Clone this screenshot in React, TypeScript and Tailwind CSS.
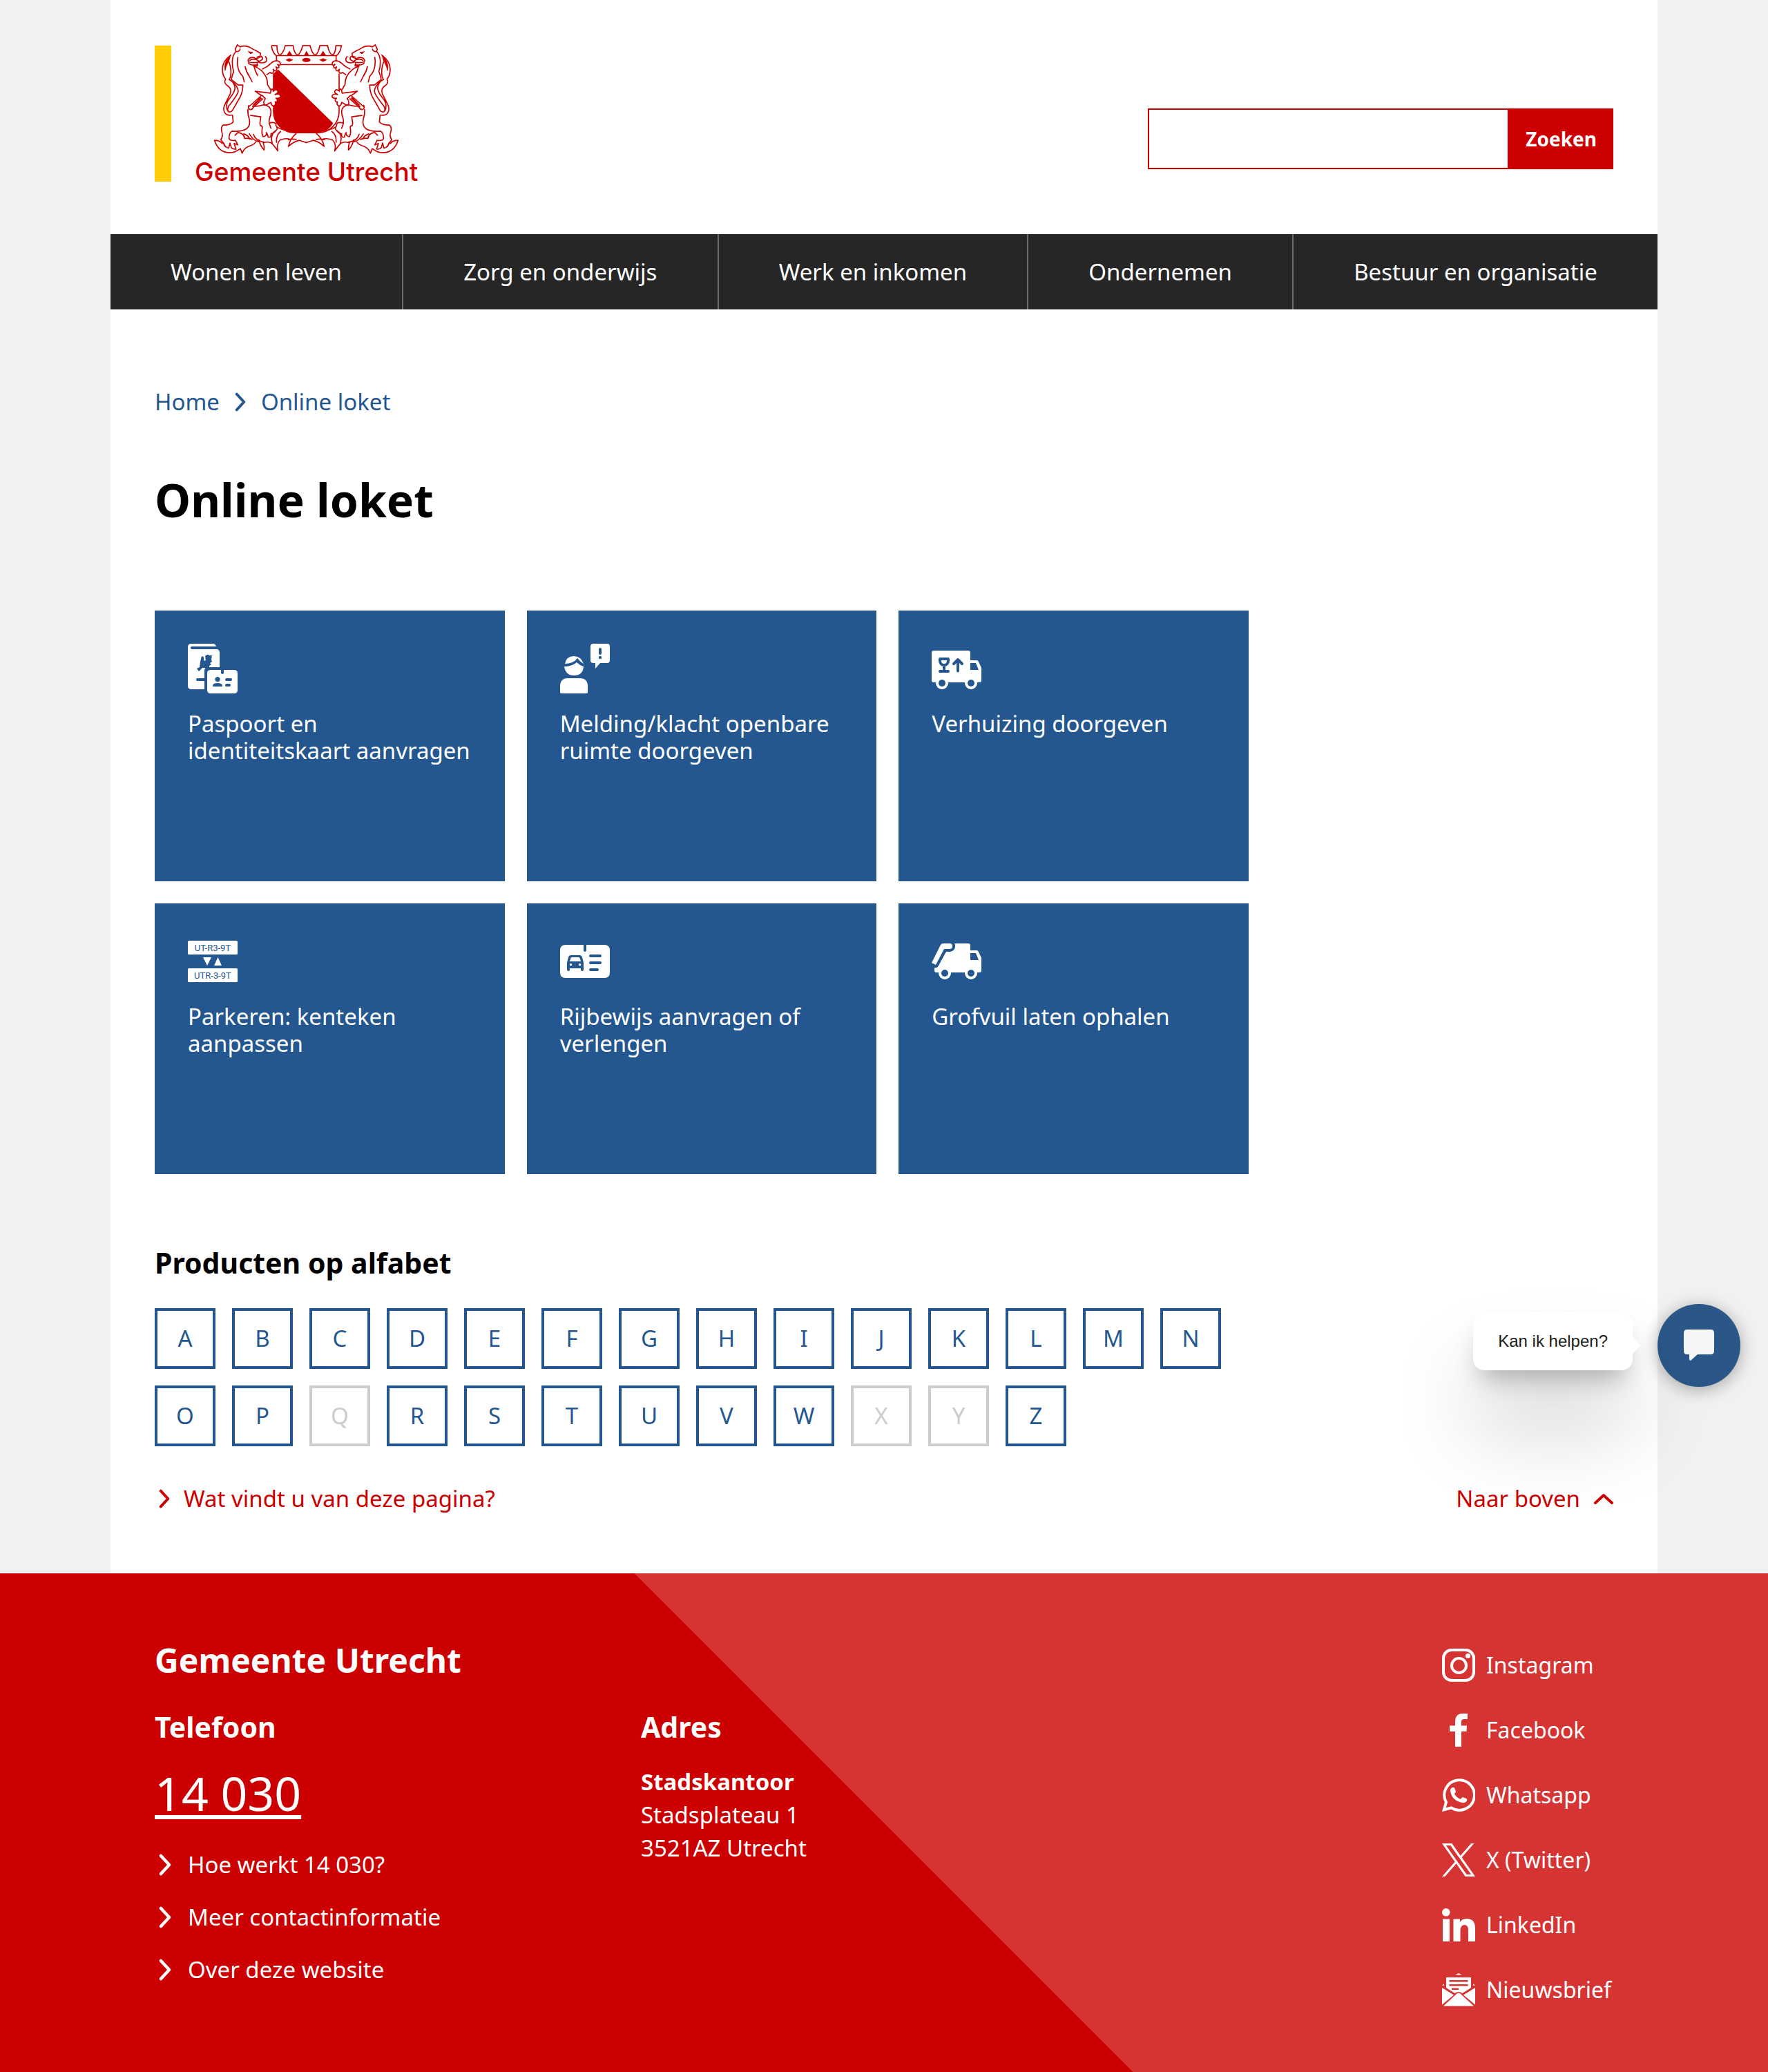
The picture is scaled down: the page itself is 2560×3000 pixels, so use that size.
import React from "react";

const BLUE = "#24578f";

function Lion() {
  return (
    <g transform="translate(300 18)" fill="none" stroke="#c00" strokeWidth="5" strokeLinejoin="round" strokeLinecap="round">
      {/* head */}
      <path d="M128 56l-3-10 9-19 12 9q22-9 44 3 12 8 22 12l23 13-2 12-14 5M128 56q14 2 18-10" />
      <path d="M182 57l10 9 9-6-9-1z" fill="#c00" strokeWidth="3" />
      <path d="M180 96q4-14 20-14 10 0 14 6l20-8M180 96q2 8 18 8 16 2 32-3l-12-9q-22-6-30 3M182 106q10 12 40 8M238 77q8 6 4 14-8 8-16 8M256 78q12 14 0 24-10 6-26 2M204 119q12 3 17 0l-1-10" />
      {/* mane, neck and chest */}
      <path d="M128 56q-16 18-16 44t6 44q-6 12-10 34l30 24h20q0 28-12 52l-32 56q-8 12-18 8-8-8 0-24 40-50 42-66-2-18-22-38M136 82q-8 54 22 82l6 24M168 122q4 22 18 42l12 24M206 118q4 24 16 42M205 120q36 12 52 44 8 14 8 36l16 26" />
      {/* tail */}
      <path d="M105 72q-36 26-36 62 0 26 14 42-10 18 10 30 18 12 10 34l-20 40q-14 24-4 42 10 14 32 10M98 102q12 34 6 66l-6 10q22 8 26 36-2 20-22 44-18 18-14 42 0 12 8 16" />
      <path d="M105 72q-4 22-14 38-8 14-10 30-6-18 2-38t22-30z" fill="#c00" strokeWidth="2" />
      {/* upper paw */}
      <path d="M244 132q20-8 38-26 10-10 24-10 16 2 15 16-4 6-12 0 8 10 5 14-6 4-12-3 6 12 0 16-8 4-12-6 4 12-2 16-6 4-12-2l-14 10" fill="#fff" />
      {/* lower paw */}
      <path d="M212 229q16 14 32 20l12 12q-10 12-6 24 10 8 18-2l12-6q2 16 12 16 12-6 6-18 10 2 10-8-2-6-6-8 18 2 20-8-4-14-24-8 14-6 12-14-6-14-20 0 2-8-6-10-6 8-6 18z" fill="#fff" />
      {/* hind legs */}
      <path d="M184 296l54-48M244 262l-42 38q-2 10-14 8-10-6-4-18" />
      <path d="M202 288l32-34 6 6-34 32z" fill="#c00" strokeWidth="2" />
      <path d="M248 288q30 2 32 28 0 16-6 30-4 16 0 20 30-6 28 12l6 12q-8 18-28 24 2 18-12 14-2-12-8-20 2 18-14 18-8-14-4-36 4-10-8-12l-2-10 4-28-44-6M248 288q-24 8-48 6" />
      <path d="M113 334l3 28q-10 14-44 14-10 8-6 28 8 18-4 36l12 14q6 18 22 22l6-22 6 20q8 8 20 6l-8-24 16 6-10-20q-24 4-28-8 0-26 14-32 38 4 62-10 18-14 12-42-8-22-6-42" />
      <path d="M272 368l8 22M74 454l6 14" />
      {/* foliage */}
      <path d="M35 442q22 0 34 14M35 442q16 52 66 54 24 0 46-18l8 20q8-26 40-34 12-4 18-14M124 420l12-12q26 2 30 26 16-4 32 4M162 414q20 6 26 22M204 416q8 28 46 34M186 414q18 30 40 34M228 440q4 24 22 44 2-22-6-36M250 452q26-8 42 12l18 24q-8-30 10-48 22-8 38-4M300 400q-26 20-14 56M322 404q-20 14-18 46M390 412q-28 24-34 56 22-20 48-26l30 10M356 440q14-6 34-2M306 384q30 20 86 14" />
    </g>
  );
}

function Crest() {
  return (
    <svg viewBox="330 40 810 485" className="h-[162px] w-[270px]" aria-hidden="true">
      <g fill="none" stroke="#c00" strokeWidth="5">
        <path d="M591 170V335a92 92 0 0 0 92 92h100a92 92 0 0 0 93-92V170" />
        <path d="M604 92H863V131H604z" />
        <path d="M582 49h24q0 38 14 40 14-8 22-40h34q6 38 20 40 12-4 22-40h32q10 38 22 40 14-4 20-40h34q8 38 22 40 12-6 14-40h24q-4 30-22 44M582 49q4 30 22 44" />
      </g>
      <path d="M591 170l20-18L850 385Q828 427 770 427H683a92 92 0 0 1-92-92z" fill="#c00" />
      <path d="M643 111l16-8 18 8-18 8zM790 111l16-8 18 8-18 8zM648 91l12-20 14 20zM794 91l12-20 14 20zM724 91l10-20 12 20z" fill="#c00" />
      <ellipse cx="734" cy="111" rx="18" ry="9" fill="#c00" />
      <Lion />
      <g transform="translate(1467 0) scale(-1 1)">
        <Lion />
      </g>
    </svg>
  );
}

function Chevron({ className }: { className: string }) {
  return (
    <svg viewBox="0 0 18 32" className={className} fill="none" stroke="currentColor" strokeWidth="4.5" strokeLinecap="round" strokeLinejoin="round" aria-hidden="true">
      <path d="M3 3l12 13L3 29" />
    </svg>
  );
}

const iconClass = "size-[72px]";

function PassportIcon() {
  return (
    <svg viewBox="0 0 72 72" className={iconClass} fill="#fff" aria-hidden="true">
      <path d="M5 0H36q4 0 5 4H6a2 2 0 0 0 0 4H41q5 0 5 5V34H29q-5 0-5 5V66H5q-5 0-5-5V5q0-5 5-5z" />
      <path d="M25 18q4-4 6-1l4 0-1 6 1 3-3 2 2 2-3 2v3l-10 0-5 5-3-4 4-2 1-8 2-8 3 1 0 6 3-1z" fill={BLUE} />
      <rect x="12" y="50" width="14" height="4" rx="2" fill={BLUE} />
      <path d="M33 38H48v4a2 2 0 0 0 4 0v-4H67q5 0 5 5V67q0 5-5 5H33q-5 0-5-5V43q0-5 5-5z" />
      <g fill={BLUE}>
        <circle cx="43" cy="51.500" r="3.600" />
        <path d="M36 61q0-4 7-4t7 4q0 1-1 1H37q-1 0-1-1z" />
        <rect x="54" y="50" width="10" height="4" rx="2" />
        <rect x="54" y="58" width="8" height="4" rx="2" />
      </g>
    </svg>
  );
}

function ReportIcon() {
  return (
    <svg viewBox="0 0 72 72" className={iconClass} fill="#fff" aria-hidden="true">
      <path d="M0 68V62Q0 50 11 50H29Q40 50 40 62v8q0 2-2 2H2q-2 0-2-2z" />
      <path d="M7 29Q9 18 20 18q10 0 14 11-5-3-9-8-6 8-18 8zM6 33q11 0 18-6 4 4 10 6Q33 46 20 46 8 46 6 33z" />
      <path d="M48 0H68q4 0 4 4V24q0 4-4 4H58L51 36V28H48q-4 0-4-4V4q0-4 4-4z" />
      <rect x="56" y="6" width="4" height="10" rx="2" fill={BLUE} />
      <circle cx="58" cy="20" r="2.200" fill={BLUE} />
    </svg>
  );
}

function MovingTruckIcon() {
  return (
    <svg viewBox="0 0 72 72" className={iconClass} fill="#fff" aria-hidden="true">
      <path fillRule="evenodd" d="M3 10H53q3 0 3 3V24h9q2 0 3 2l4 9V53q0 3-3 3H3q-3 0-3-3V13q0-3 3-3zM56 28V38H68L64 28z" />
      <circle cx="15" cy="57" r="9" />
      <circle cx="57" cy="57" r="9" />
      <g fill={BLUE}>
        <circle cx="15" cy="57" r="5" />
        <circle cx="57" cy="57" r="5" />
      </g>
      <g fill="none" stroke={BLUE} strokeWidth="4" strokeLinecap="round" strokeLinejoin="round">
        <path d="M12 22H24V25a6 6 0 0 1-12 0zM18 31V40M12 40H24M38 23V39.500M32 29l6-6 6 6" />
      </g>
    </svg>
  );
}

function PlatesIcon() {
  return (
    <svg viewBox="0 0 72 72" className={iconClass} fill="#fff" aria-hidden="true">
      <rect y="6" width="72" height="20" rx="1.500" />
      <rect y="46" width="72" height="20" rx="1.500" />
      <path d="M22 30H34L28 42zM38 42H49L43.500 30z" />
      <g fill={BLUE} fontFamily="Roboto, sans-serif" fontSize="13" fontWeight="400" textAnchor="middle">
        <text x="36" y="21">UT-R3-9T</text>
        <text x="36" y="61">UTR-3-9T</text>
      </g>
    </svg>
  );
}

function LicenceIcon() {
  return (
    <svg viewBox="0 0 72 72" className={iconClass} fill="#fff" aria-hidden="true">
      <path d="M8 12H34v8a2 2 0 0 0 4 0v-8H64q8 0 8 8V52q0 8-8 8H8q-8 0-8-8V20q0-8 8-8z" />
      <g fill={BLUE}>
        <path fillRule="evenodd" d="M16 27H28q3 0 4 3l2 8V48q0 2-2 2t-2-2V46H14v2q0 2-2 2t-2-2V38l2-8q1-3 4-3zM17 30q-1 0-2 2l-1 4H30l-1-4q-1-2-2-2zM15.500 39a1.700 1.700 0 1 0 .1 0zM28.500 39a1.700 1.700 0 1 0 .1 0z" />
        <rect x="42" y="26" width="18" height="4" rx="2" />
        <rect x="42" y="36" width="18" height="4" rx="2" />
        <rect x="42" y="46" width="14" height="4" rx="2" />
      </g>
    </svg>
  );
}

function GarbageTruckIcon() {
  return (
    <svg viewBox="0 0 72 72" className={iconClass} fill="#fff" aria-hidden="true">
      <path d="M0 38L13 12Q14 10 17 10H26a4 4 0 0 1 0 8H18L6 41z" />
      <path fillRule="evenodd" d="M33 10H53q3 0 3 3v7h9q2 0 3 2l4 9V49q0 3-3 3H7q-3 0-3-3V45q4 1 6-3L21 22h6q8-2 7-10zM56 24V34H68L64 24z" />
      <circle cx="19" cy="53" r="9" />
      <circle cx="57" cy="53" r="9" />
      <g fill={BLUE}>
        <circle cx="19" cy="53" r="5" />
        <circle cx="57" cy="53" r="5" />
      </g>
    </svg>
  );
}

const socialClass = "size-12 shrink-0";

function InstagramIcon() {
  return (
    <svg viewBox="0 0 48 48" className={socialClass} fill="none" stroke="#fff" strokeWidth="4" aria-hidden="true">
      <rect x="2" y="2" width="44" height="44" rx="12" />
      <circle cx="24.500" cy="24.500" r="10.500" />
      <circle cx="37.500" cy="10.500" r="3.600" fill="#fff" stroke="none" />
    </svg>
  );
}

function FacebookIcon() {
  return (
    <svg viewBox="0 0 48 48" className={socialClass} fill="#fff" aria-hidden="true">
      <path d="M19 48V26H11V17.500H19V12Q19 0 30 0h7V8H32q-4 0-4 4v5.500h8L35.500 26H28V48z" />
    </svg>
  );
}

function WhatsappIcon() {
  return (
    <svg viewBox="0 0 48 48" className={socialClass} aria-hidden="true">
      <path d="M2.800 45.300L6 34.500A21.800 21.800 0 1 1 13.500 42.500z" fill="none" stroke="#fff" strokeWidth="4" strokeLinejoin="miter" />
      <path d="M12 18q0-4 3-5h2q1 0 2 3l1 3q0 1-2 3 2 5 9 8 2-3 3-3l5 2q2 1 1 3-2 4-7 3-15-3-17-17z" fill="#fff" />
    </svg>
  );
}

function XIcon() {
  return (
    <svg viewBox="1 1 22 22" className={socialClass} fill="#fff" aria-hidden="true">
      <path d="M14.095 10.316L22.286 1h-1.940l-7.115 8.088L7.551 1H1l8.589 12.231L1 23h1.941l7.509-8.543L16.449 23H23zM11.437 13.338l-.872-1.218L3.641 2.432h2.981l5.590 7.821.868 1.219 7.265 10.166h-2.981z" />
    </svg>
  );
}

function LinkedinIcon() {
  return (
    <svg viewBox="0 0 48 48" className={socialClass} fill="#fff" aria-hidden="true">
      <circle cx="5.800" cy="5.800" r="5.800" />
      <path d="M1 15.500H11V48H1zM16.500 15.500H26V20q3-5 10-5 12 0 12 14V48H38V32q0-8-5.500-8T26.500 32V48h-10z" />
    </svg>
  );
}

function NewsletterIcon() {
  return (
    <svg viewBox="0 0 48 48" className={socialClass} fill="#fff" aria-hidden="true">
      <path d="M24 0l5 2.500H19zM0 17.500l3-2v2.500zM48 17.500l-3-2v2.500zM0 21l17 10.500L0 45.500zM48 21L31 31.500l17 14zM2 47.500L21 30q3-2.500 6 0l19 17.500z" />
      <path fillRule="evenodd" d="M6 6H42V21L29.500 29q-5.500-4-11 0L6 21zM10.500 10v2.500h27V10zM10.500 16v2.500h27V16zM14 21.500V24H24v-2.500z" />
    </svg>
  );
}

const navItems = ["Wonen en leven", "Zorg en onderwijs", "Werk en inkomen", "Ondernemen", "Bestuur en organisatie"];

const tiles = [
  { label: "Paspoort en identiteitskaart aanvragen", Icon: PassportIcon },
  { label: "Melding/klacht openbare ruimte doorgeven", Icon: ReportIcon },
  { label: "Verhuizing doorgeven", Icon: MovingTruckIcon },
  { label: "Parkeren: kenteken aanpassen", Icon: PlatesIcon },
  { label: "Rijbewijs aanvragen of verlengen", Icon: LicenceIcon },
  { label: "Grofvuil laten ophalen", Icon: GarbageTruckIcon },
];

const letters = "ABCDEFGHIJKLMNOPQRSTUVWXYZ".split("");
const emptyLetters = ["Q", "X", "Y"];

const footerLinks = ["Hoe werkt 14 030?", "Meer contactinformatie", "Over deze website"];

const socials = [
  { label: "Instagram", Icon: InstagramIcon },
  { label: "Facebook", Icon: FacebookIcon },
  { label: "Whatsapp", Icon: WhatsappIcon },
  { label: "X (Twitter)", Icon: XIcon },
  { label: "LinkedIn", Icon: LinkedinIcon },
  { label: "Nieuwsbrief", Icon: NewsletterIcon },
];

function ChatWidget() {
  return (
    <div className="absolute right-10 bottom-[270px] flex items-center gap-9">
      <div className="relative mb-3 rounded-2xl bg-white px-9 py-7 font-['Liberation_Sans',Arial,sans-serif] text-2xl leading-7 text-[#1c1c1c] shadow-[0_24px_36px_-12px_rgba(0,0,0,0.28),0_84px_120px_rgba(0,0,0,0.18)]">
        Kan ik helpen?
        <span className="absolute top-9 left-full border-y-12 border-l-12 border-y-transparent border-l-white" />
      </div>
      <button type="button" aria-label="Open chat" className="flex size-[120px] items-center justify-center rounded-full bg-[#2a5788] shadow-[0_4px_24px_rgba(0,0,0,0.32)]">
        <svg viewBox="0 0 44 46" className="h-[46px] w-11" fill="#f6f6f6" aria-hidden="true">
          <path d="M5 0H39q5 0 5 5V31q0 5-5 5H20L10 45q-2 0-2-2V36H5q-5 0-5-5V5q0-5 5-5z" />
        </svg>
      </button>
    </div>
  );
}

export default function App() {
  return (
    <div className="bg-[#f1f1f1] font-['Noto_Sans','Open_Sans',sans-serif] text-[33px] leading-[48px] text-black">
      <div className="relative">
        <div className="mx-40 bg-white">
          <header>
            <div className="flex items-start justify-between px-16 pt-[63px] pb-[70px]">
              <a href="#" aria-label="Gemeente Utrecht" className="flex gap-[34px] text-[#c00]">
                <span className="mt-[3px] h-[197px] w-6 bg-[#ffcc05]" />
                <span className="flex flex-col items-center gap-1">
                  <Crest />
                  <span className="font-[Inter,sans-serif] text-[37px] leading-10 font-medium">Gemeente Utrecht</span>
                </span>
              </a>
              <form className="mt-[94px] flex h-[88px] w-[674px]" role="search">
                <input type="search" aria-label="Zoeken" className="min-w-0 flex-1 border-2 border-[#c00] bg-white px-4 outline-none" />
                <button type="button" className="bg-[#c00] px-6 text-[28px] font-bold text-white">Zoeken</button>
              </form>
            </div>
            <nav className="flex bg-[#262626] text-white">
              {navItems.map((item) => (
                <a key={item} href="#" className="flex-auto border-r-2 border-[#6b6b6b] py-[30px] text-center leading-[49px] last:border-r-0">
                  {item}
                </a>
              ))}
            </nav>
          </header>
          <main className="px-16 pt-[110px] pb-[84px]">
            <nav className="flex items-center gap-[22px] text-[#24578f]" aria-label="Kruimelpad">
              <a href="#">Home</a>
              <Chevron className="h-7 w-4" />
              <a href="#">Online loket</a>
            </nav>
            <h1 className="mt-[77px] text-[66px] leading-[80px] font-bold">Online loket</h1>
            <div className="mt-[121px] grid w-3/4 grid-cols-3 gap-8">
              {tiles.map(({ label, Icon }) => (
                <a key={label} href="#" className="flex min-h-[392px] flex-col gap-6 bg-[#24578f] p-12 text-white">
                  <Icon />
                  <span className="leading-[39px]">{label}</span>
                </a>
              ))}
            </div>
            <h2 className="mt-[104px] text-[41px] leading-[48px] font-bold">Producten op alfabet</h2>
            <ul className="mt-[42px] flex w-3/4 flex-wrap gap-6">
              {letters.map((letter) => (
                <li key={letter}>
                  {emptyLetters.includes(letter) ? (
                    <span className="flex size-[88px] items-center justify-center border-4 border-[#ccc] text-[#ccc]">{letter}</span>
                  ) : (
                    <a href="#" className="flex size-[88px] items-center justify-center border-4 border-[#24578f] text-[#24578f]">{letter}</a>
                  )}
                </li>
              ))}
            </ul>
            <div className="mt-[52px] flex justify-between text-[#c00]">
              <a href="#" className="flex items-center gap-5 pl-1.5">
                <Chevron className="h-7 w-4" />
                Wat vindt u van deze pagina?
              </a>
              <a href="#" className="flex items-center gap-5">
                Naar boven
                <svg viewBox="0 0 28 16" className="h-4 w-7" fill="none" stroke="currentColor" strokeWidth="4" strokeLinecap="round" strokeLinejoin="round" aria-hidden="true">
                  <path d="M2 14L14 3l12 11" />
                </svg>
              </a>
            </div>
          </main>
        </div>
        <ChatWidget />
      </div>
      <footer className="bg-[linear-gradient(45deg,#c00_50%,#d63333_50%)] py-24 text-white">
        <div className="mx-56 grid grid-cols-3">
          <div>
            <h2 className="text-[48px] leading-[60px] font-bold">Gemeente Utrecht</h2>
            <h3 className="mt-[42px] text-[41px] leading-[48px] font-bold">Telefoon</h3>
            <a href="tel:14030" className="mt-8 inline-block text-[68px] leading-[80px] underline decoration-6 underline-offset-6">14 030</a>
            <ul className="mt-10 flex flex-col gap-7">
              {footerLinks.map((label) => (
                <li key={label}>
                  <a href="#" className="flex items-center gap-6 pl-1.5">
                    <Chevron className="h-8 w-[18px]" />
                    {label}
                  </a>
                </li>
              ))}
            </ul>
          </div>
          <div className="pt-[102px]">
            <h3 className="text-[41px] leading-[48px] font-bold">Adres</h3>
            <address className="mt-8 not-italic">
              <strong>Stadskantoor</strong>
              <br />
              Stadsplateau 1
              <br />
              3521AZ Utrecht
            </address>
          </div>
          <ul className="mt-[13px] flex min-w-62 flex-col gap-[46px] justify-self-end text-[32px]">
            {socials.map(({ label, Icon }) => (
              <li key={label}>
                <a href="#" className="flex items-center gap-4">
                  <Icon />
                  {label}
                </a>
              </li>
            ))}
          </ul>
        </div>
      </footer>
    </div>
  );
}
